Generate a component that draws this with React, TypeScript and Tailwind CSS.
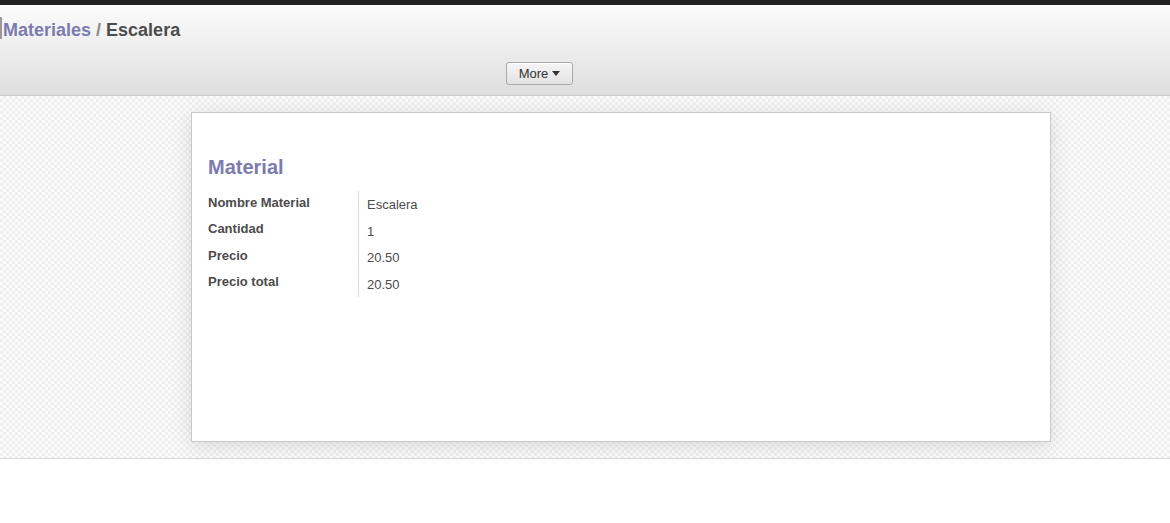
import React from "react";

const rows: [string, string][] = [
  ["Nombre Material", "Escalera"],
  ["Cantidad", "1"],
  ["Precio", "20.50"],
  ["Precio total", "20.50"],
];

export default function App() {
  return (
    <div className="w-[1170px] h-[523px] bg-white overflow-hidden text-[#4c4c4c] font-['Liberation_Sans',Arial,sans-serif]">
      <div className="h-[5px] bg-[#222]" />
      <div className="h-[91px] border-b border-[#cacaca] bg-gradient-to-b from-[#fcfcfc] to-[#dedede] flex flex-col">
        <div className="h-[48px] flex items-center relative">
          <div className="absolute left-0 top-[12px] w-[2px] h-[22px] bg-[#9a9a9a]" />
          <div className="pl-[3px] pt-[2px] text-[18px] font-bold leading-none">
            <span className="text-[#7c7bad]">Materiales</span>
            <span className="text-[#8a8a8a]"> / </span>
            <span className="text-[#4c4c4c]">Escalera</span>
          </div>
        </div>
        <div className="flex justify-center pt-[9px] pr-[91px]">
          <button className="w-[67px] h-[23px] border border-[#a9a9a9] rounded-[3px] bg-gradient-to-b from-[#f6f6f6] to-[#e2e2e2] text-[13px] text-[#333] flex items-center justify-center gap-[4px] shadow-[inset_0_1px_0_#fff]">
            More
            <svg width="8" height="5" viewBox="0 0 8 5"><path d="M0 0h8L4 5z" fill="#333" /></svg>
          </button>
        </div>
      </div>
      <div className="h-[363px] border-b border-[#d8d8d8] bg-[#f6f6f6] bg-[image:repeating-conic-gradient(#efefef_0%_25%,#fbfbfb_0%_50%)] bg-[length:6px_6px] pt-[16px]">
        <div className="ml-[191px] w-[860px] h-[330px] bg-white border border-[#c8c8c8] shadow-[0_4px_20px_rgba(0,0,0,0.12)] px-[16px] pt-[42px]">
          <h1 className="text-[20px] font-bold text-[#7c7bad] leading-[24px]">Material</h1>
          <div className="mt-[12px] flex">
            <div className="w-[151px] border-r border-[#ddd] pr-2">
              {rows.map(([l], i) => (
                <div key={l} className={`text-[13px] font-bold text-[#4c4c4c] leading-[16px] ${i === 3 ? "h-[27px]" : "h-[26.3px]"} pt-[4px]`}>
                  {l}
                </div>
              ))}
            </div>
            <div className="pl-[8px]">
              {rows.map(([l, v]) => (
                <div key={l} className="h-[26.5px] text-[13px] text-[#4c4c4c] leading-[16px] pt-[6px]">
                  {v}
                </div>
              ))}
            </div>
          </div>
        </div>
      </div>
    </div>
  );
}
